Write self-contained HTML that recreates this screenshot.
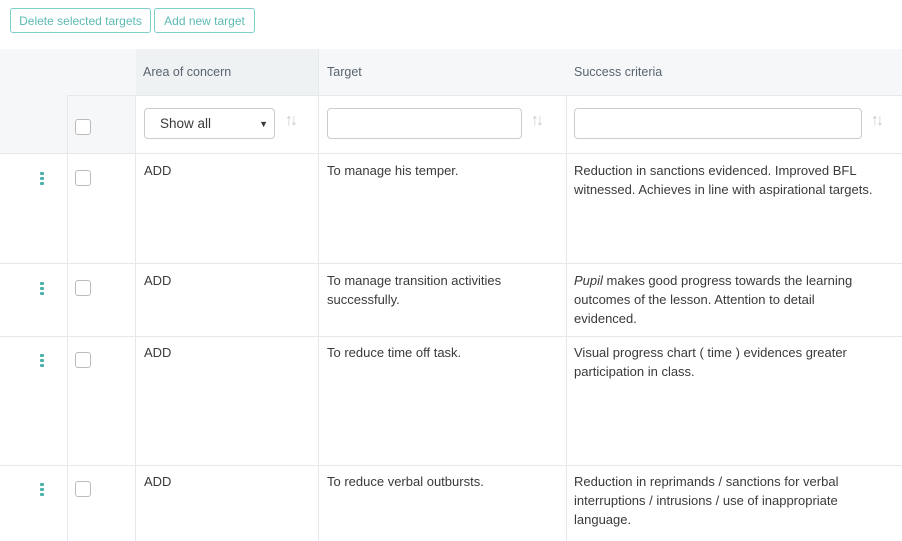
<!DOCTYPE html>
<html><head><style>
body{margin:0;width:902px;height:541px;overflow:hidden;background:#fff;font-family:"Liberation Sans",sans-serif;color:#3a3a3a;font-size:13px;position:relative}
.btn{position:absolute;top:8px;height:25px;border:1px solid #7fcfc9;border-radius:3px;color:#5cbab3;font-size:12px;line-height:25px;text-align:center;box-sizing:border-box}
.a{position:absolute}
.cb{position:absolute;width:14px;height:14px;border:1px solid #bbb;border-radius:3px;background:#fff}
.vl{position:absolute;width:1px;background:#e6e9ea}
.hl{position:absolute;height:1px;background:#e6e9ea;left:0;width:902px}
.h{position:absolute;top:65px;font-size:12.5px;color:#5a6570}
.t{position:absolute;line-height:19px}
.dots{position:absolute;left:40px;width:4px}
.dots i{display:block;width:4px;height:3px;background:#4bb3a9;margin-bottom:2px;border-radius:1px}
.sort{position:absolute;color:#c6cbcf;font-size:16px;letter-spacing:-3px}
.inp{position:absolute;top:108px;height:31px;border:1px solid #ccc;border-radius:4px;box-sizing:border-box;background:#fff}
</style></head><body>
<div class="btn" style="left:10px;width:141px">Delete selected targets</div>
<div class="btn" style="left:154px;width:101px">Add new target</div>
<div class="a" style="left:0;top:49px;width:902px;height:104px;background:#f5f7f8"></div>
<div class="a" style="left:136px;top:49px;width:182px;height:46px;background:#eef2f3"></div>
<div class="a" style="left:136px;top:96px;width:766px;height:57px;background:#fff"></div>
<div class="hl" style="top:95px;left:67px;width:835px"></div>
<div class="hl" style="top:153px"></div>
<div class="hl" style="top:263px"></div>
<div class="hl" style="top:336px"></div>
<div class="hl" style="top:465px"></div>
<div class="vl" style="left:67px;top:95px;height:446px"></div>
<div class="vl" style="left:135px;top:95px;height:446px"></div>
<div class="vl" style="left:318px;top:49px;height:492px"></div>
<div class="vl" style="left:566px;top:95px;height:446px"></div>
<div class="h" style="left:143px">Area of concern</div>
<div class="h" style="left:327px">Target</div>
<div class="h" style="left:574px">Success criteria</div>
<div class="cb" style="left:75px;top:119px"></div>
<div class="inp" style="left:144px;width:131px;font-size:13.5px;line-height:30px;padding-left:15px">Show all<span style="position:absolute;right:6px;font-size:9px">▼</span></div>
<div class="sort" style="left:285px;top:112px">↑↓</div>
<div class="inp" style="left:327px;width:195px"></div>
<div class="sort" style="left:531px;top:112px">↑↓</div>
<div class="inp" style="left:574px;width:288px"></div>
<div class="sort" style="left:871px;top:112px">↑↓</div>

<div class="dots" style="top:172px"><i></i><i></i><i></i></div>
<div class="cb" style="left:75px;top:170px"></div>
<div class="t" style="left:144px;top:161px">ADD</div>
<div class="t" style="left:327px;top:161px">To manage his temper.</div>
<div class="t" style="left:574px;top:161px">Reduction in sanctions evidenced. Improved BFL<br>witnessed. Achieves in line with aspirational targets.</div>

<div class="dots" style="top:282px"><i></i><i></i><i></i></div>
<div class="cb" style="left:75px;top:280px"></div>
<div class="t" style="left:144px;top:271px">ADD</div>
<div class="t" style="left:327px;top:271px">To manage transition activities<br>successfully.</div>
<div class="t" style="left:574px;top:271px"><i>Pupil</i> makes good progress towards the learning<br>outcomes of the lesson. Attention to detail<br>evidenced.</div>

<div class="dots" style="top:354px"><i></i><i></i><i></i></div>
<div class="cb" style="left:75px;top:352px"></div>
<div class="t" style="left:144px;top:343px">ADD</div>
<div class="t" style="left:327px;top:343px">To reduce time off task.</div>
<div class="t" style="left:574px;top:343px">Visual progress chart ( time ) evidences greater<br>participation in class.</div>

<div class="dots" style="top:483px"><i></i><i></i><i></i></div>
<div class="cb" style="left:75px;top:481px"></div>
<div class="t" style="left:144px;top:472px">ADD</div>
<div class="t" style="left:327px;top:472px">To reduce verbal outbursts.</div>
<div class="t" style="left:574px;top:472px">Reduction in reprimands / sanctions for verbal<br>interruptions / intrusions / use of inappropriate<br>language.</div>
</body></html>
